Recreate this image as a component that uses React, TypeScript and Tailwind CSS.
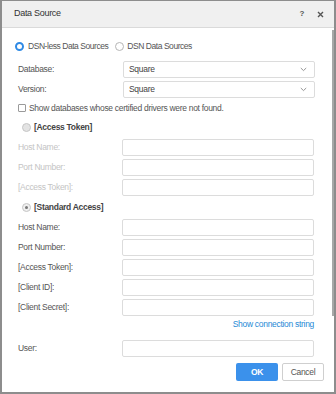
import React from "react";

const font = { fontFamily: '"Liberation Sans", Arial, sans-serif' };

function Input({ children }: { children?: React.ReactNode }) {
  return (
    <div className="w-[192px] h-[17px] border border-[#dcdcdc] rounded-[2px] bg-white flex items-center px-[5px] text-[#333]">
      {children}
    </div>
  );
}

function Row({ label, disabled }: { label: string; disabled?: boolean }) {
  return (
    <div className="h-[20px] flex items-center pl-[16px]">
      <div className={`w-[104px] ${disabled ? "text-[#c4c4c4]" : "text-[#555]"}`}>{label}</div>
      <Input />
    </div>
  );
}

function Select({ label, value }: { label: string; value: string }) {
  return (
    <div className="h-[20px] flex items-center pl-[16px]">
      <div className="w-[105px] text-[#555]">{label}</div>
      <div className="w-[192px] h-[17px] border border-[#dcdcdc] rounded-[2px] bg-white flex items-center justify-between pl-[5px] pr-[7px] text-[#444]">
        <span>{value}</span>
        <svg width="7" height="5" viewBox="0 0 7 5">
          <path d="M0.8 1 L3.5 3.6 L6.2 1" fill="none" stroke="#8a8a8a" strokeWidth="0.9" />
        </svg>
      </div>
    </div>
  );
}

export default function App() {
  return (
    <div
      className="w-[336px] h-[394px] bg-white border-x-2 border-b-2 border-t border-[#8d8d8d] relative flex flex-col text-[8.5px] tracking-[-0.3px]"
      style={font}
    >
      <div className="h-[27px] bg-[#f0f0f0] border-b border-[#dadada] flex items-center pl-[12px] pr-[10px] shrink-0">
        <div className="text-[9px] text-[#333] flex-1">Data Source</div>
        <div className="text-[#555] text-[8px] font-bold mr-[13px]">?</div>
        <svg width="7" height="7" viewBox="0 0 7 7">
          <path d="M1 1 L6 6 M6 1 L1 6" stroke="#555" strokeWidth="1.4" />
        </svg>
      </div>

      <div className="flex flex-col pt-[8px]">
        <div className="h-[20px] flex items-center pl-[13px] text-[#555] tracking-[-0.45px]">
          <span className="w-[9px] h-[9px] rounded-full border-[2.5px] border-[#2f8ae5] bg-white mr-[4px]" />
          <span className="mr-[7px]">DSN-less Data Sources</span>
          <span className="w-[9px] h-[9px] rounded-full border border-[#b5b5b5] bg-white mr-[3px]" />
          <span>DSN Data Sources</span>
        </div>

        <div className="mt-[3px]">
          <Select label="Database:" value="Square" />
          <Select label="Version:" value="Square" />
        </div>

        <div className="h-[18px] flex items-center pl-[16px] text-[#555]">
          <span className="w-[8px] h-[8px] border border-[#9a9a9a] rounded-[1px] bg-white mr-[3px]" />
          <span>Show databases whose certified drivers were not found.</span>
        </div>

        <div className="h-[20px] flex items-center pl-[20px] font-bold text-[#444] text-[8.5px]">
          <span className="w-[9px] h-[9px] rounded-full border border-[#c6c6c6] bg-[#e3e3e3] mr-[3px]" />
          <span>[Access Token]</span>
        </div>
        <Row label="Host Name:" disabled />
        <Row label="Port Number:" disabled />
        <Row label="[Access Token]:" disabled />

        <div className="h-[20px] flex items-center pl-[20px] font-bold text-[#444] text-[8.5px]">
          <span className="w-[9px] h-[9px] rounded-full border border-[#c6c6c6] bg-[#efefef] mr-[3px] flex items-center justify-center">
            <span className="w-[3px] h-[3px] rounded-full bg-[#777]" />
          </span>
          <span>[Standard Access]</span>
        </div>
        <Row label="Host Name:" />
        <Row label="Port Number:" />
        <Row label="[Access Token]:" />
        <Row label="[Client ID]:" />
        <Row label="[Client Secret]:" />

        <div className="h-[14px] flex items-center justify-end pr-[20px] text-[#1f8ad6]">
          Show connection string
        </div>

        <div className="mt-[7px]">
          <Row label="User:" />
        </div>

        <div className="mt-[5px] flex justify-end pr-[10px] gap-[4px]">
          <div className="w-[42px] h-[18px] rounded-[2px] bg-[#3b91eb] text-white flex items-center justify-center font-bold">
            OK
          </div>
          <div className="w-[42px] h-[18px] rounded-[2px] border border-[#cfcfcf] bg-white text-[#555] flex items-center justify-center">
            Cancel
          </div>
        </div>
      </div>

      <div className="absolute right-[0px] top-[29px] w-[2px] h-[286px] bg-[#a8a8a8]" />
    </div>
  );
}
